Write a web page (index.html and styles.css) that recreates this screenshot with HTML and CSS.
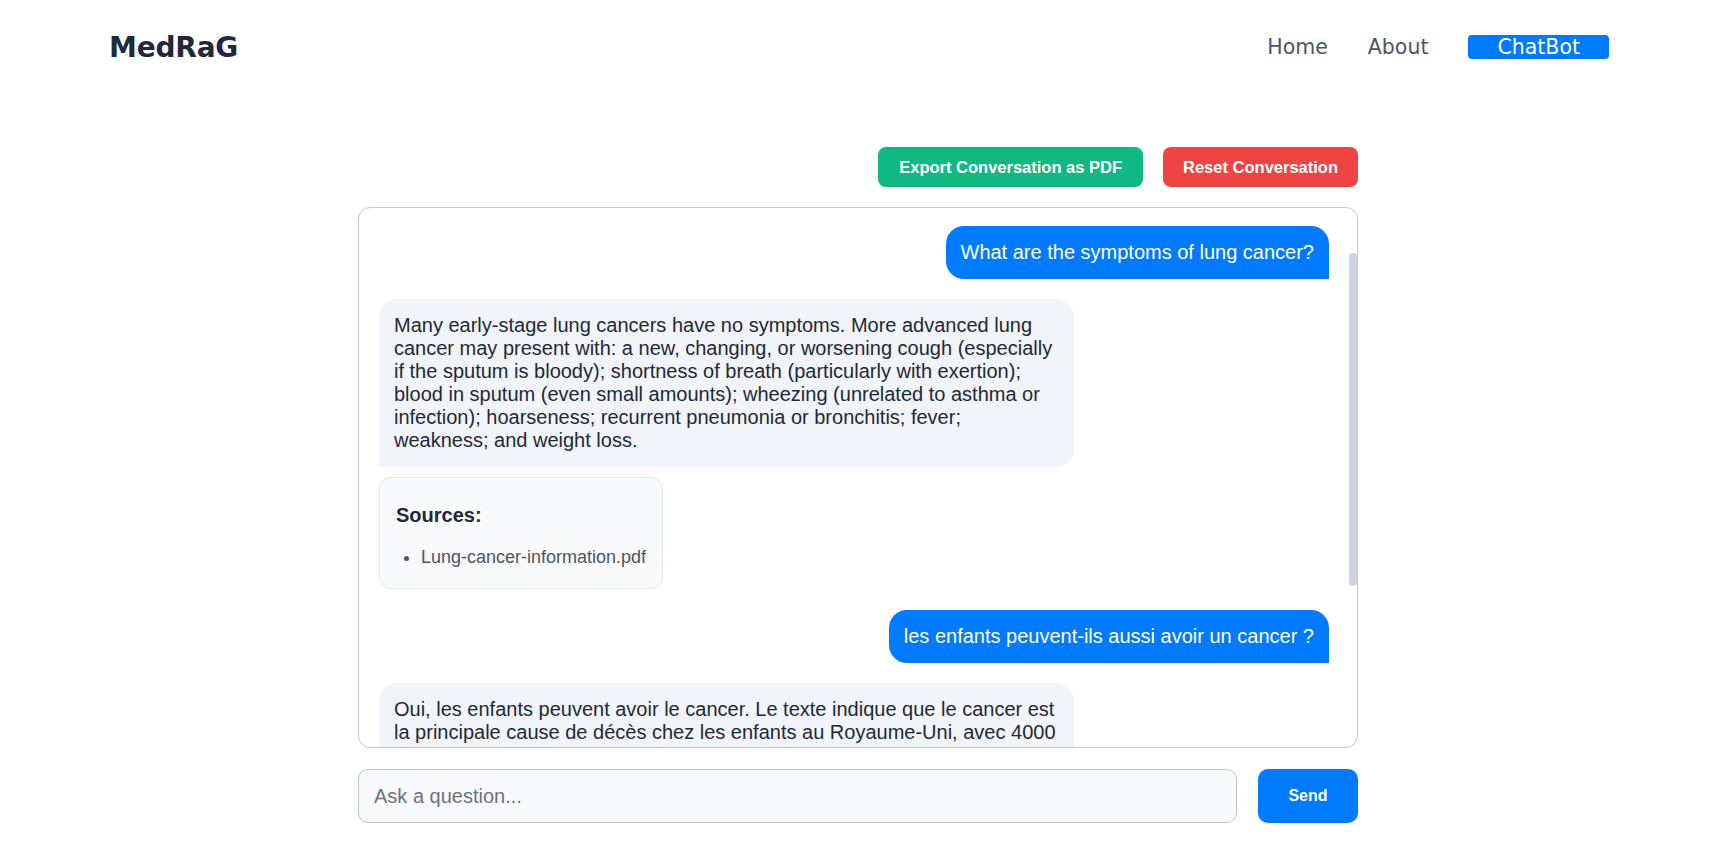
FILE: index.html
```html
<!DOCTYPE html>
<html lang="en">
<head>
<meta charset="utf-8">
<title>MedRaG - ChatBot</title>
<link rel="stylesheet" href="styles.css">
</head>
<body>
<header class="site-header">
  <div class="header-inner">
    <a class="logo" href="#">MedRaG</a>
    <nav class="nav">
      <a class="nav-link" href="#">Home</a>
      <a class="nav-link" href="#">About</a>
      <a class="nav-link nav-active" href="#">ChatBot</a>
    </nav>
  </div>
</header>
<main class="chat-page">
  <div class="actions">
    <button class="btn btn-export" type="button">Export Conversation as PDF</button>
    <button class="btn btn-reset" type="button">Reset Conversation</button>
  </div>
  <div class="chat-box">
    <div class="chat-scroll">
      <div class="msg msg-user"><div class="bubble bubble-user">What are the symptoms of lung cancer?</div></div>
      <div class="msg msg-bot">
        <div class="bubble bubble-bot">Many early-stage lung cancers have no symptoms. More advanced lung cancer may present with: a new, changing, or worsening cough (especially if the sputum is bloody); shortness of breath (particularly with exertion); blood in sputum (even small amounts); wheezing (unrelated to asthma or infection); hoarseness; recurrent pneumonia or bronchitis; fever; weakness; and weight loss.</div>
        <div class="sources">
          <h4 class="sources-title">Sources:</h4>
          <ul class="sources-list"><li>Lung-cancer-information.pdf</li></ul>
        </div>
      </div>
      <div class="msg msg-user"><div class="bubble bubble-user">les enfants peuvent-ils aussi avoir un cancer ?</div></div>
      <div class="msg msg-bot">
        <div class="bubble bubble-bot">Oui, les enfants peuvent avoir le cancer. Le texte indique que le cancer est la principale cause de décès chez les enfants au Royaume-Uni, avec 4000 nouveaux cas diagnostiqués chaque année. Les types de cancer les plus fréquents chez les enfants sont la leucémie, les tumeurs cérébrales et les lymphomes. Heureusement, les taux de survie se sont considérablement améliorés grâce aux progrès des traitements.</div>
        <div class="sources">
          <h4 class="sources-title">Sources:</h4>
          <ul class="sources-list"><li>Children-cancer-information.pdf</li></ul>
        </div>
      </div>
    </div>
    <div class="scrollbar" aria-hidden="true"><div class="scroll-thumb"></div></div>
  </div>
  <form class="input-row" onsubmit="return false;">
    <input class="chat-input" type="text" placeholder="Ask a question...">
    <button class="send-btn" type="submit">Send</button>
  </form>
</main>
</body>
</html>
```
FILE: styles.css
```css
* { box-sizing: border-box; }
html, body { margin: 0; padding: 0; background: #ffffff; }
body { font-family: "Liberation Sans", Arial, sans-serif; color: #1f2937; }

.site-header { height: 94px; }
.header-inner {
  max-width: 1500px;
  height: 100%;
  margin: 0 auto;
  display: flex;
  align-items: center;
  justify-content: space-between;
}
.logo {
  font-family: "DejaVu Sans", sans-serif;
  font-weight: 700;
  font-size: 28px;
  color: #1e293b;
  text-decoration: none;
  letter-spacing: -0.2px;
}
.nav { display: flex; align-items: center; gap: 40px; }
.nav-link {
  font-family: "DejaVu Sans", sans-serif;
  font-size: 20.5px;
  color: #4b5563;
  text-decoration: none;
  line-height: 24px;
}
.nav-active {
  background: #007bff;
  color: #ffffff;
  border-radius: 4px;
  padding: 0 29px;
}

.chat-page {
  width: 1002px;
  padding-right: 2px;
  margin: 53px auto 0;
}
.actions {
  display: flex;
  justify-content: flex-end;
  gap: 20px;
  margin-bottom: 20px;
}
.btn {
  font-family: "Liberation Sans", Arial, sans-serif;
  font-weight: 700;
  font-size: 16.5px;
  color: #ffffff;
  border: none;
  border-radius: 8px;
  height: 40px;
  padding: 0 20px;
}
.btn-export { background: #10b981; padding: 0 21px; }
.btn-reset { background: #ef4444; }

.chat-box {
  height: 541px;
  border: 1px solid #c4c7cc;
  border-radius: 12px;
  display: flex;
  overflow: hidden;
  background: #ffffff;
}
.chat-scroll {
  flex: 1;
  min-width: 0;
  overflow-y: auto;
  scrollbar-width: none;
  padding: 18px 20px 20px;
  display: flex;
  flex-direction: column;
  gap: 20px;
}
.chat-scroll::-webkit-scrollbar { display: none; }
.scrollbar {
  width: 8px;
  flex-shrink: 0;
  padding-top: 45px;
}
.scroll-thumb {
  height: 333px;
  background: #cbd5e1;
  border-radius: 4px;
}

.msg { display: flex; flex-shrink: 0; }
.msg-user { justify-content: flex-end; }
.msg-bot { flex-direction: column; align-items: flex-start; gap: 10px; }

.bubble {
  box-sizing: content-box;
  font-size: 20px;
  line-height: 23px;
  padding: 15px;
  max-width: 70%;
}
.bubble-user {
  background: #007bff;
  color: #ffffff;
  border-radius: 18px 18px 0 18px;
}
.bubble-bot {
  background: #f1f4f8;
  color: #1f2937;
  border-radius: 18px 18px 18px 0;
}

.sources {
  background: #f8fafc;
  border: 1px solid #e2e8f0;
  border-radius: 12px;
  padding: 0 16px;
  margin-bottom: 1px;
}
.sources-title {
  margin: 26px 0 20px;
  font-size: 20px;
  line-height: 23px;
  font-weight: 700;
  color: #1f2937;
}
.sources-list {
  margin: 0 0 20px;
  padding-left: 25px;
  font-size: 18px;
  line-height: 21px;
  color: #4b5563;
}

.input-row {
  display: flex;
  gap: 21px;
  margin-top: 21px;
}
.chat-input {
  flex: 1;
  min-width: 0;
  height: 54px;
  font-family: "Liberation Sans", Arial, sans-serif;
  font-size: 20px;
  padding: 0 15px;
  border: 1px solid #bfc4ca;
  border-radius: 10px;
  background: #f8f9fb;
  color: #1f2937;
  outline: none;
}
.chat-input::placeholder { color: #6b7280; }
.send-btn {
  width: 100px;
  height: 54px;
  border: none;
  border-radius: 10px;
  background: #007bff;
  color: #ffffff;
  font-family: "Liberation Sans", Arial, sans-serif;
  font-weight: 700;
  font-size: 16px;
}
```
